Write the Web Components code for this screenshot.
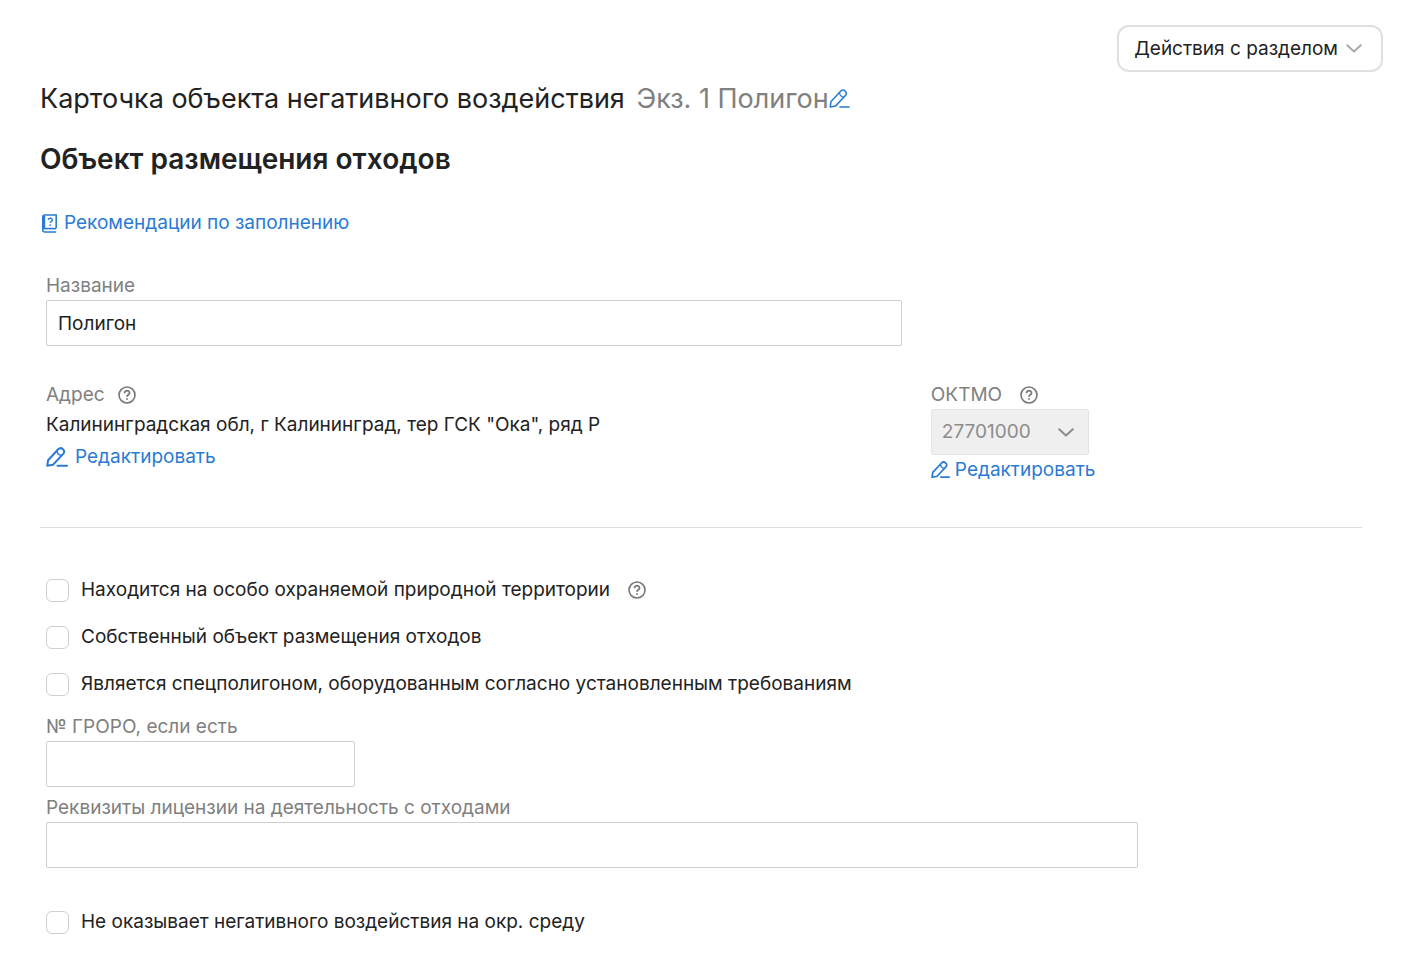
<!DOCTYPE html>
<html lang="ru">
<head>
<meta charset="UTF-8">
<meta name="viewport" content="width=device-width, initial-scale=1">
<title>Карточка объекта негативного воздействия</title>
<style>
  body {
    margin: 0;
    background: #fff;
    color: #222;
    font-family: Inter, "Liberation Sans", sans-serif;
    font-size: 19px;
    line-height: 24px;
  }
</style>
</head>
<body>
<object-card></object-card>

<script>
const ICONS = {
  pencil: `<svg viewBox="0 0 22 20" fill="none" stroke="currentColor" stroke-linejoin="round" stroke-linecap="round" style="stroke-width: var(--stroke, 2)">
    <path d="M1.200 18.800l.9-5.600L12.200 2.300A3.400 3.400 0 0 1 17.200 6.900L7 17.700z"/><path d="M11 4.200q.6 3.800 4.500 4.300" stroke-width="1.400"/><path d="M11.500 18.800h9.500"/></svg>`,
  book: `<svg viewBox="0 0 15 19" fill="none" stroke="currentColor" stroke-width="1.600">
    <path d="M14.200 14.200V1H2.500A1.700 1.700 0 0 0 .8 2.700v13.600a1.700 1.700 0 0 0 1.700 1.700h11.700"/><path d="M2 2v13" stroke-width="2.400"/><path d="M1.500 14.600h12.700"/>
    <path d="M6.200 5.900c.1-2.400 4.300-2.200 4.100.2-.1 1.400-2 1.400-2 3" stroke-width="1.500"/><path d="M7.500 11.200h1.600" stroke-width="1.500"/></svg>`,
  help: `<svg viewBox="0 0 18 18" fill="none" stroke="currentColor" stroke-width="1.600">
    <circle cx="9" cy="9" r="8"/><path d="M6.500 7.200c0-3.400 5.200-3.200 5 0-.1 1.700-2.500 1.600-2.500 3.500" stroke-width="1.800"/><circle cx="9" cy="13" r=".6" stroke-width="1"/></svg>`,
  chevron: `<svg viewBox="0 0 16 9" fill="none" stroke="currentColor" stroke-width="2" stroke-linecap="round" stroke-linejoin="round">
    <path d="M1.200 1.200L8 7.600l6.800-6.400"/></svg>`
};

class CardIcon extends HTMLElement {
  connectedCallback() {
    this.attachShadow({ mode: 'open' });
    this.shadowRoot.innerHTML = `
      <style>
        :host { display: inline-flex; flex: none; width: 18px; }
        svg { display: block; width: 100%; }
      </style>
      ${ICONS[this.getAttribute('name')]}
    `;
    this.setAttribute('aria-hidden', 'true');
  }
}

class ActionsButton extends HTMLElement {
  connectedCallback() {
    this.attachShadow({ mode: 'open' });
    this.shadowRoot.innerHTML = `
      <style>
        :host { display: block; }
        button {
          display: flex;
          align-items: center;
          gap: 8px;
          height: 47px;
          padding: 0 19px 0 15px;
          border: 2px solid #e0e0e0;
          border-radius: 12px;
          background: #fff;
          color: inherit;
          font: inherit;
          cursor: pointer;
        }
        card-icon { width: 16px; color: #aaa; }
      </style>
      <button type="button" aria-haspopup="menu"><slot></slot><card-icon name="chevron"></card-icon></button>
    `;
  }
}

class IconLink extends HTMLElement {
  connectedCallback() {
    const icon = this.getAttribute('icon');
    this.attachShadow({ mode: 'open' });
    this.shadowRoot.innerHTML = `
      <style>
        :host { display: flex; --icon: 22px; --gap: 7px; }
        a {
          display: inline-flex;
          align-items: center;
          gap: var(--gap);
          color: #2a7bd3;
          text-decoration: none;
        }
        a:hover { text-decoration: underline; }
        card-icon { width: var(--icon); }
      </style>
      <a href="#"><card-icon name="${icon}"></card-icon><slot></slot></a>
    `;
    if (this.hasAttribute('label')) {
      this.shadowRoot.querySelector('a').setAttribute('aria-label', this.getAttribute('label'));
    }
  }
}

class HelpButton extends HTMLElement {
  connectedCallback() {
    this.attachShadow({ mode: 'open' });
    this.shadowRoot.innerHTML = `
      <style>
        :host { display: inline-flex; color: #777; }
        button {
          display: flex;
          padding: 0;
          border: 0;
          background: none;
          color: inherit;
          cursor: pointer;
        }
      </style>
      <button type="button" aria-label="Справка"><card-icon name="help"></card-icon></button>
    `;
  }
}

class TextField extends HTMLElement {
  connectedCallback() {
    this.attachShadow({ mode: 'open' });
    this.shadowRoot.innerHTML = `
      <style>
        :host { display: flex; flex-direction: column; gap: 2px; }
        label { color: #808080; }
        input {
          box-sizing: border-box;
          width: 100%;
          height: 46px;
          padding: 0 11px;
          border: 1px solid #cfcfcf;
          border-radius: 2px;
          background: #fff;
          color: #222;
          font: inherit;
        }
      </style>
      <label for="field"><slot></slot></label>
      <input id="field" type="text">
    `;
    this.shadowRoot.querySelector('input').value = this.getAttribute('value') || '';
  }
}

class CodeSelect extends HTMLElement {
  connectedCallback() {
    const value = this.getAttribute('value');
    this.attachShadow({ mode: 'open' });
    this.shadowRoot.innerHTML = `
      <style>
        :host { display: flex; flex-direction: column; align-items: flex-start; gap: 2px; }
        .caption { display: flex; align-items: center; gap: 18px; color: #808080; }
        .box { display: grid; align-items: center; width: 158px; color: #8c8c8c; }
        .box > * { grid-area: 1 / 1; }
        select {
          appearance: none;
          box-sizing: border-box;
          width: 100%;
          height: 46px;
          padding: 0 10px;
          border: 1px solid #e2e2e2;
          border-radius: 2px;
          background: #efefef;
          color: #8c8c8c;
          font: inherit;
          opacity: 1;
        }
        card-icon { width: 16px; justify-self: end; margin-right: 15px; pointer-events: none; }
      </style>
      <div class="caption"><label for="code"><slot></slot></label><help-button></help-button></div>
      <div class="box">
        <select id="code" disabled><option>${value}</option></select>
        <card-icon name="chevron"></card-icon>
      </div>
    `;
  }
}

class CheckRow extends HTMLElement {
  connectedCallback() {
    this.attachShadow({ mode: 'open' });
    this.shadowRoot.innerHTML = `
      <style>
        :host { display: flex; align-items: center; gap: 18px; }
        label { display: flex; align-items: center; gap: 12px; cursor: pointer; }
        input {
          appearance: none;
          flex: none;
          width: 23px;
          height: 23px;
          margin: 0;
          border: 1px solid #cfcfcf;
          border-radius: 6px;
          background: #fff;
        }
        input:checked { background: #2a7bd3; border-color: #2a7bd3; }
      </style>
      <label><input type="checkbox"><slot></slot></label>
      <slot name="help"></slot>
    `;
  }
}

class ObjectCard extends HTMLElement {
  connectedCallback() {
    this.attachShadow({ mode: 'open' });
    this.shadowRoot.innerHTML = `
      <style>
        :host { display: block; padding: 25px 35px 40px 40px; }
        .toolbar { display: flex; justify-content: flex-end; }
        .title { display: flex; align-items: baseline; flex-wrap: wrap; margin-top: 9px; }
        h1, h2 { margin: 0; line-height: 36px; }
        h1 { font-size: 27px; font-weight: 400; }
        h1 span { margin-left: 4px; color: #808080; }
        .title icon-link { --icon: 21px; --stroke: 1.6; }
        h2 { margin-top: 24px; font-size: 28px; font-weight: 600; }
        .guide { margin: 34px 0 0 2px; --icon: 15px; }
        form { margin-right: 21px; }
        .main {
          display: grid;
          grid-template-columns: 133fr 67fr;
          gap: 37px 29px;
          padding: 39px 0 45px 6px;
          border-bottom: 1px solid #dedede;
        }
        .main text-field { grid-area: 1 / 1; }
        .address { grid-area: 2 / 1; }
        .code { grid-area: 2 / 2; }
        .caption { display: flex; align-items: center; gap: 13px; color: #808080; }
        .address p { margin: 6px 0 8px; }
        .code icon-link { margin-top: 3px; --icon: 19px; --gap: 5px; }
        .flags { display: flex; flex-direction: column; gap: 23px; padding: 50px 0 19px 6px; }
        .licence { display: flex; flex-direction: column; gap: 9px; padding-left: 6px; }
        .licence text-field { width: 83%; }
        .licence .short { width: 309px; }
        .last { margin: 42px 0 0 6px; }
      </style>
      <div class="toolbar"><actions-button>Действия с разделом</actions-button></div>
      <div class="title">
        <h1>Карточка объекта негативного воздействия <span>Экз. 1 Полигон</span></h1>
        <icon-link icon="pencil" label="Переименовать"></icon-link>
      </div>
      <h2>Объект размещения отходов</h2>
      <icon-link class="guide" icon="book">Рекомендации по заполнению</icon-link>
      <form>
        <div class="main">
          <text-field value="Полигон">Название</text-field>
          <div class="address">
            <div class="caption">Адрес <help-button></help-button></div>
            <p>Калининградская обл, г Калининград, тер ГСК "Ока", ряд Р</p>
            <icon-link icon="pencil">Редактировать</icon-link>
          </div>
          <div class="code">
            <code-select value="27701000">ОКТМО</code-select>
            <icon-link icon="pencil">Редактировать</icon-link>
          </div>
        </div>
        <div class="flags">
          <check-row>Находится на особо охраняемой природной территории<help-button slot="help"></help-button></check-row>
          <check-row>Собственный объект размещения отходов</check-row>
          <check-row>Является спецполигоном, оборудованным согласно установленным требованиям</check-row>
        </div>
        <div class="licence">
          <text-field class="short">№ ГРОРО, если есть</text-field>
          <text-field>Реквизиты лицензии на деятельность с отходами</text-field>
        </div>
        <check-row class="last">Не оказывает негативного воздействия на окр. среду</check-row>
      </form>
    `;
  }
}

customElements.define('card-icon', CardIcon);
customElements.define('actions-button', ActionsButton);
customElements.define('icon-link', IconLink);
customElements.define('help-button', HelpButton);
customElements.define('text-field', TextField);
customElements.define('code-select', CodeSelect);
customElements.define('check-row', CheckRow);
customElements.define('object-card', ObjectCard);
</script>
</body>
</html>
